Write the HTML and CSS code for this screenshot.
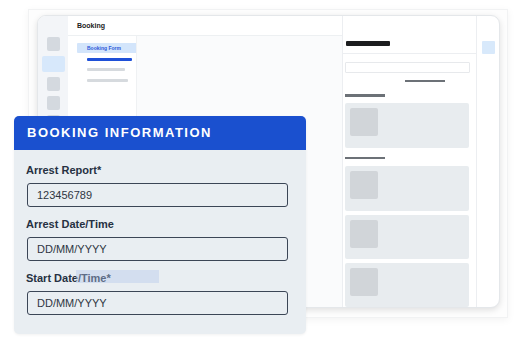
FILE: index.html
```html
<!DOCTYPE html>
<html lang="en">
<head>
    <meta charset="UTF-8">
    <meta name="viewport" content="width=device-width, initial-scale=1.0">
    <title>Booking</title>
    <link rel="stylesheet" href="styles.css">
</head>
<body>

    <div class="scene">
        <div class="frame">
            <div class="window">
                <aside class="rail-left">
                    <span class="ico"></span>
                    <span class="ico ico-active"></span>
                    <span class="ico"></span>
                    <span class="ico"></span>
                    <span class="ico"></span>
                </aside>

                <div class="topbar">Booking</div>

                <nav class="subnav">
                    <div class="pill">Booking Form</div>
                    <span class="bar bar-blue"></span>
                    <span class="bar bar-gray bar-short"></span>
                    <span class="bar bar-gray"></span>
                </nav>

                <main class="canvas"></main>

                <section class="panel">
                    <div class="panel-head"><span class="bar-dark"></span></div>
                    <div class="panel-input"></div>
                    <span class="bar-mid"></span>
                    <span class="bar-label"></span>
                    <div class="tile"><span class="thumb"></span></div>
                    <span class="bar-label"></span>
                    <div class="tile tile-first"><span class="thumb"></span></div>
                    <div class="tile"><span class="thumb"></span></div>
                    <div class="tile"><span class="thumb"></span></div>
                </section>

                <aside class="rail-right"><span class="ico-blue"></span></aside>
            </div>
        </div>

        <div class="booking-card">
            <div class="card-head">BOOKING INFORMATION</div>
            <div class="card-body">
                <label class="field-label">Arrest Report*</label>
                <div class="field">123456789</div>

                <label class="field-label">Arrest Date/Time</label>
                <div class="field">DD/MM/YYYY</div>

                <label class="field-label">Start Date/Time*</label>
                <div class="field">DD/MM/YYYY</div>
            </div>
            <span class="ghost"></span>
        </div>
    </div>

</body>
</html>
```

FILE: styles.css
```css
* {
    box-sizing: border-box;
}
body {
    margin: 0;
    background: #ffffff;
    font-family: "Liberation Sans", Arial, sans-serif;
}
.scene {
    position: relative;
    width: 523px;
    height: 344px;
    overflow: hidden;
    padding: 9px 0 0 28px;
}
.frame {
    width: 480px;
    height: 309px;
    background: #fdfdfd;
    border: 1px solid #f1f2f3;
    box-shadow: 0px 2px 8px rgba(0, 0, 0, 0.05);
    padding: 5px 7px 9px 8px;
}
.window {
    width: 463px;
    height: 293px;
    background: white;
    border: 1px solid #e4e7ea;
    border-radius: 9px;
    box-shadow: 0px 2px 6px rgba(0, 0, 0, 0.12);
    overflow: hidden;
    display: grid;
    grid-template-columns: 30px 68px 206px 135px 22px;
    grid-template-rows: 20px 1fr;
}

/* left icon rail */
.rail-left {
    grid-column: 1;
    grid-row: 1 / 3;
    background: #f3f5f8;
    display: flex;
    flex-direction: column;
    align-items: center;
    padding-top: 21px;
    gap: 5px;
}
.ico {
    width: 13px;
    height: 14px;
    border-radius: 2px;
    background: #d4d9df;
}
.ico-active {
    width: 23px;
    height: 16px;
    background: #d7e8fb;
}
.ico-active + .ico {
    margin-top: 0;
}

/* header */
.topbar {
    grid-column: 2 / 4;
    grid-row: 1;
    border-bottom: 1px solid #edf0f2;
    font-size: 7px;
    font-weight: bold;
    color: #222;
    padding: 6px 0 0 9px;
}

/* secondary nav */
.subnav {
    grid-column: 2;
    grid-row: 2;
    display: flex;
    flex-direction: column;
    align-items: flex-start;
    padding-top: 7px;
}
.pill {
    margin-left: 9px;
    width: 61px;
    height: 10px;
    border-radius: 1px;
    background: #d3e5fb;
    color: #2c57d8;
    font-size: 5px;
    font-weight: bold;
    line-height: 10px;
    padding-left: 10px;
    white-space: nowrap;
}
.bar {
    display: block;
    margin-left: 19px;
    height: 3px;
    border-radius: 1px;
}
.bar-blue {
    width: 45px;
    margin-top: 5px;
    background: #1e50d8;
}
.bar-gray {
    width: 41px;
    margin-top: 8px;
    background: #d6dade;
}
.bar-short {
    width: 38px;
    margin-top: 7px;
}

.canvas {
    grid-column: 3;
    grid-row: 2;
    background: #fafbfc;
    border-left: 1px solid #eff1f3;
}

/* right panel */
.panel {
    grid-column: 4;
    grid-row: 1 / 3;
    border-left: 1px solid #eceef1;
    border-right: 1px solid #eceef1;
    display: flex;
    flex-direction: column;
    align-items: flex-start;
    padding: 0 4px 0 2px;
}
.panel-head {
    align-self: stretch;
    margin: 0 -4px 0 -2px;
    padding: 25px 0 0 3px;
    height: 38px;
    border-bottom: 1px solid #eceef1;
}
.bar-dark {
    display: block;
    width: 44px;
    height: 5px;
    border-radius: 1px;
    background: #1c1d1f;
}
.panel-input {
    width: 125px;
    height: 11px;
    margin-top: 8px;
    border: 1px solid #e7e9ec;
    border-radius: 1px;
}
.bar-mid {
    display: block;
    width: 40px;
    height: 3px;
    margin: 7px 0 0 60px;
    background: #6c7177;
}
.bar-label {
    display: block;
    width: 40px;
    height: 3px;
    margin-top: 12px;
    background: #6c7177;
}
.tile {
    width: 124px;
    height: 45px;
    margin-top: 5px;
    border-radius: 2px;
    background: #e8ecef;
    padding: 5px;
}
.bar-label + .tile {
    margin-top: 6px;
}
.tile + .bar-label {
    margin-top: 9px;
}
.tile-first {
    margin-top: 7px !important;
}
.tile + .tile {
    margin-top: 4px;
}
.thumb {
    display: block;
    width: 28px;
    height: 28px;
    border-radius: 2px;
    background: #d1d5d9;
}

.rail-right {
    grid-column: 5;
    grid-row: 1 / 3;
    padding: 25px 0 0 5px;
}
.ico-blue {
    display: block;
    width: 13px;
    height: 13px;
    border-radius: 1px;
    background: #d8e9fb;
}

/* floating form card */
.booking-card {
    position: absolute;
    left: 14px;
    top: 116px;
    width: 292px;
    height: 218px;
    border-radius: 5px;
    background: #e9eef2;
    box-shadow: 0px 1px 3px rgba(0, 0, 0, 0.06);
    overflow: hidden;
}
.card-head {
    height: 34px;
    background: #1a50cf;
    color: white;
    font-size: 13px;
    font-weight: bold;
    letter-spacing: 1.5px;
    line-height: 34px;
    padding-left: 13px;
}
.card-body {
    display: flex;
    flex-direction: column;
    padding: 13px 18px 0 12px;
}
.field-label {
    font-size: 11px;
    font-weight: bold;
    line-height: 14px;
    color: #263142;
}
.field {
    height: 24px;
    margin: 6px 0 10px 1px;
    border: 1px solid #3b4656;
    border-radius: 3px;
    font-size: 11px;
    line-height: 22px;
    color: #2f3642;
    padding-left: 9px;
}
.ghost {
    position: absolute;
    left: 62px;
    top: 154px;
    width: 83px;
    height: 13px;
    background: rgba(178, 198, 236, 0.4);
}
```
